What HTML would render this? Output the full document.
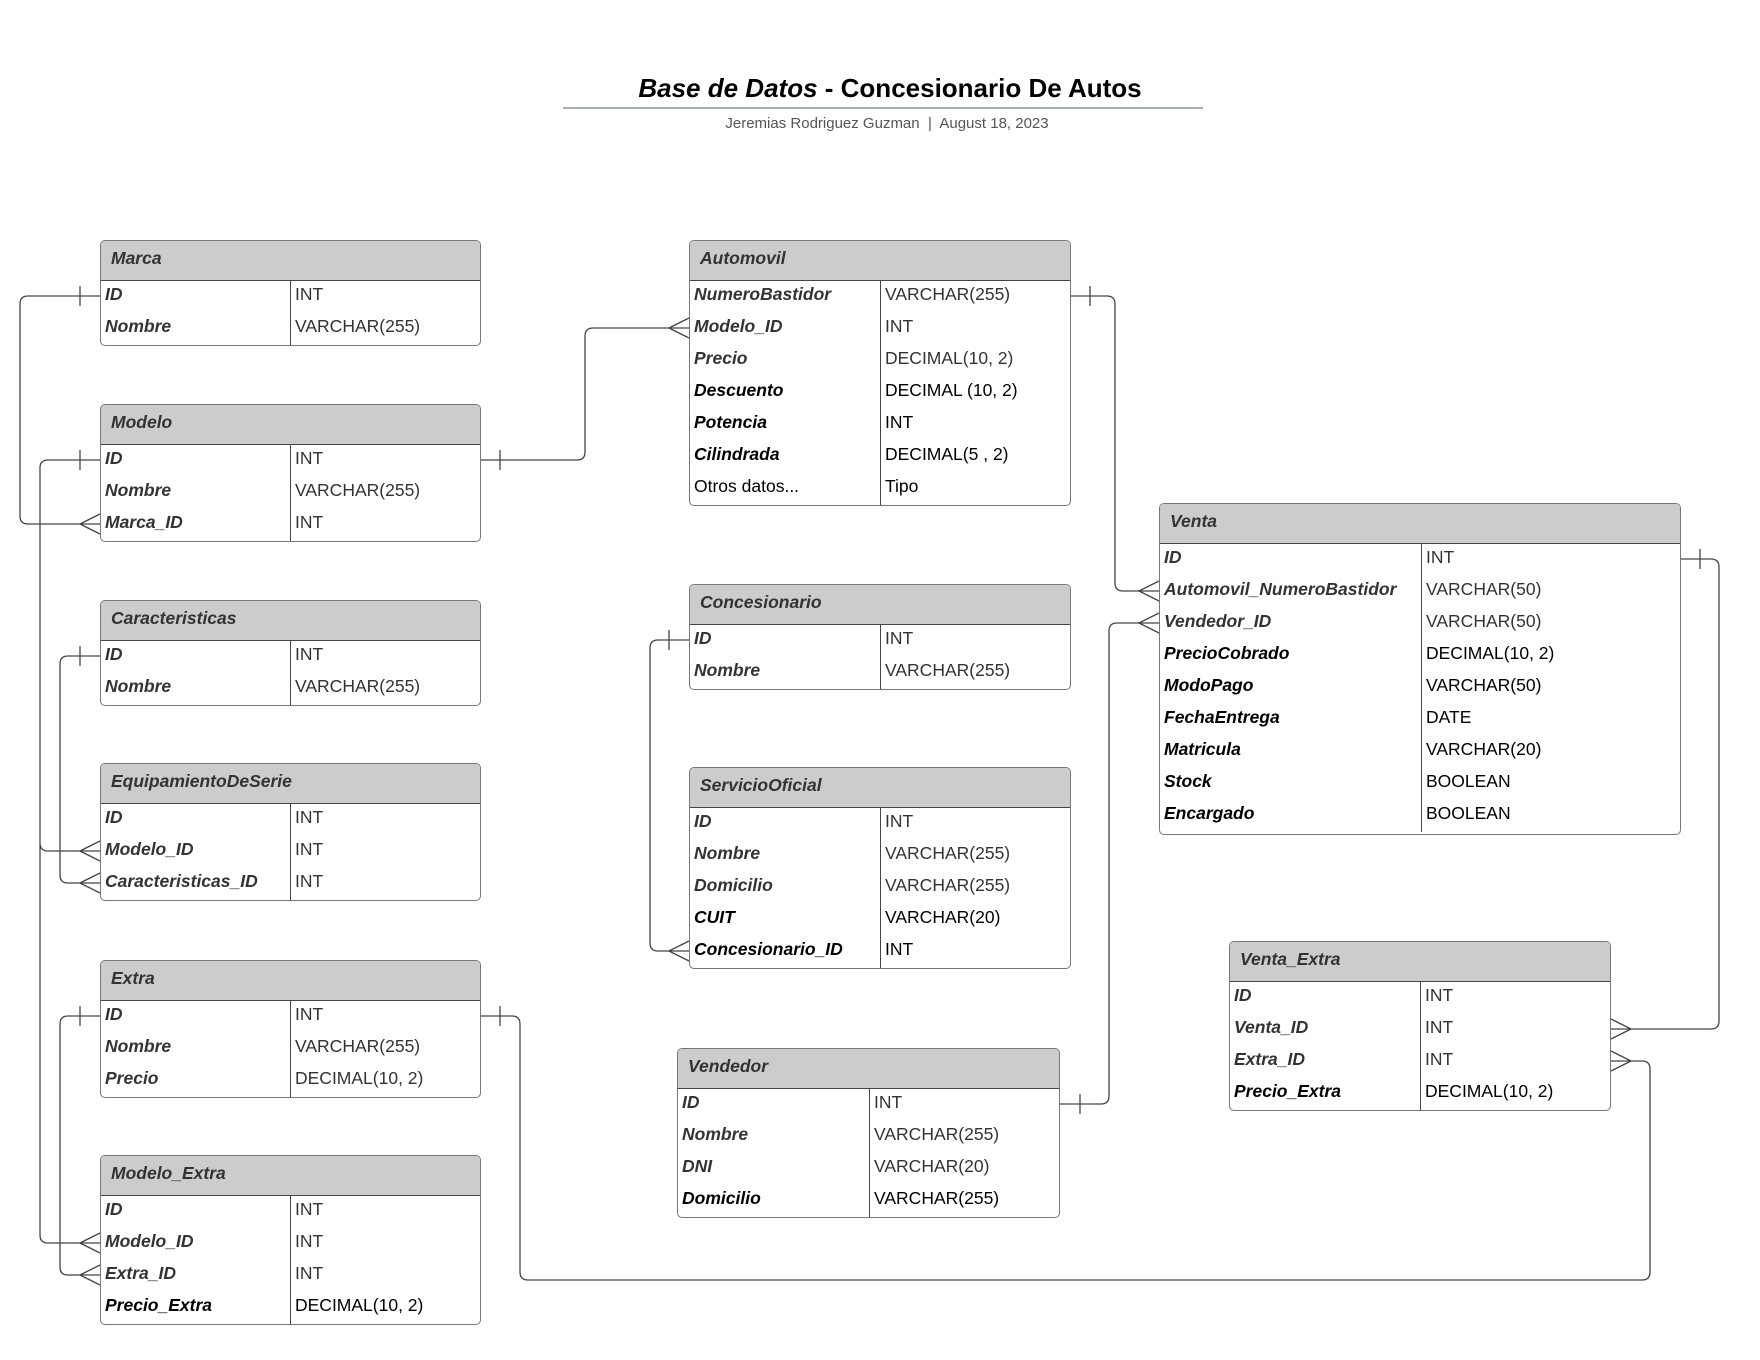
<!DOCTYPE html>
<html><head><meta charset="utf-8"><style>
body{margin:0;width:1760px;height:1360px;background:#fff;position:relative;font-family:"Liberation Sans",sans-serif;overflow:hidden}
.t{position:absolute;border:1.3px solid #777;border-radius:5px;background:#fff;overflow:hidden;box-sizing:border-box}
.h{height:40px;background:#ccc;border-bottom:1.3px solid #444;box-sizing:border-box;font-weight:bold;font-style:italic;font-size:17.5px;line-height:34px;padding-left:10px;color:#333}
.r{height:32px;line-height:26px;display:flex;font-size:17.5px;color:#333}
.k{border-right:1.3px solid #444;padding-left:4px;font-weight:bold;font-style:italic;box-sizing:border-box;flex:none;white-space:nowrap}
.v{padding-left:4px;white-space:nowrap}
.b{color:#000}
.n{font-weight:normal;font-style:normal}
</style></head><body>
<div style="position:absolute;left:0;width:1780px;top:73px;text-align:center;font-size:26px;font-weight:bold;color:#000"><i>Base de Datos</i> - Concesionario De Autos</div>
<div style="position:absolute;left:563px;width:640px;top:107px;height:2px;background:#a8adb8"></div>
<div style="position:absolute;left:0;width:1774px;top:115px;text-align:center;font-size:15px;color:#555">Jeremias Rodriguez Guzman &nbsp;|&nbsp; August 18, 2023</div>

<svg width="1760" height="1360" style="position:absolute;left:0;top:0" fill="none" stroke="#444" stroke-width="1.3">
<path d="M100 296H28Q20 296 20 304V516Q20 524 28 524H100"/><path d="M80 286V306M80 524L100 514M80 524L100 534"/>
<path d="M100 460H48Q40 460 40 468V1235Q40 1243 48 1243H100M40 843Q40 851 48 851H100"/><path d="M80 450V470M80 851L100 841M80 851L100 861M80 1243L100 1233M80 1243L100 1253"/>
<path d="M481 460H577Q585 460 585 452V336Q585 328 593 328H689"/><path d="M500 450V470M669 328L689 318M669 328L689 338"/>
<path d="M100 656H68Q60 656 60 664V875Q60 883 68 883H100"/><path d="M80 646V666M80 883L100 873M80 883L100 893"/>
<path d="M100 1016H68Q60 1016 60 1024V1267Q60 1275 68 1275H100"/><path d="M80 1006V1026M80 1275L100 1265M80 1275L100 1285"/>
<path d="M481 1016H512Q520 1016 520 1024V1272Q520 1280 528 1280H1642Q1650 1280 1650 1272V1069Q1650 1061 1642 1061H1611"/><path d="M500 1006V1026M1631 1061L1611 1051M1631 1061L1611 1071"/>
<path d="M1071 296H1107Q1115 296 1115 304V583Q1115 591 1123 591H1159"/><path d="M1090 286V306M1139 591L1159 581M1139 591L1159 601"/>
<path d="M1060 1104H1101Q1109 1104 1109 1096V631Q1109 623 1117 623H1159"/><path d="M1080 1094V1114M1139 623L1159 613M1139 623L1159 633"/>
<path d="M1681 559H1711Q1719 559 1719 567V1021Q1719 1029 1711 1029H1611"/><path d="M1700 549V569M1631 1029L1611 1019M1631 1029L1611 1039"/>
<path d="M689 640H658Q650 640 650 648V943Q650 951 658 951H689"/><path d="M669 630V650M669 951L689 941M669 951L689 961"/>
</svg>

<div class="t" style="left:100px;top:240px;width:381px;height:106px"><div class="h">Marca</div>
<div class="r"><div class="k" style="width:190px">ID</div><div class="v">INT</div></div>
<div class="r"><div class="k" style="width:190px">Nombre</div><div class="v">VARCHAR(255)</div></div></div>

<div class="t" style="left:100px;top:404px;width:381px;height:138px"><div class="h">Modelo</div>
<div class="r"><div class="k" style="width:190px">ID</div><div class="v">INT</div></div>
<div class="r"><div class="k" style="width:190px">Nombre</div><div class="v">VARCHAR(255)</div></div>
<div class="r"><div class="k" style="width:190px">Marca_ID</div><div class="v">INT</div></div></div>

<div class="t" style="left:100px;top:600px;width:381px;height:106px"><div class="h">Caracteristicas</div>
<div class="r"><div class="k" style="width:190px">ID</div><div class="v">INT</div></div>
<div class="r"><div class="k" style="width:190px">Nombre</div><div class="v">VARCHAR(255)</div></div></div>

<div class="t" style="left:100px;top:763px;width:381px;height:138px"><div class="h">EquipamientoDeSerie</div>
<div class="r"><div class="k" style="width:190px">ID</div><div class="v">INT</div></div>
<div class="r"><div class="k" style="width:190px">Modelo_ID</div><div class="v">INT</div></div>
<div class="r"><div class="k" style="width:190px">Caracteristicas_ID</div><div class="v">INT</div></div></div>

<div class="t" style="left:100px;top:960px;width:381px;height:138px"><div class="h">Extra</div>
<div class="r"><div class="k" style="width:190px">ID</div><div class="v">INT</div></div>
<div class="r"><div class="k" style="width:190px">Nombre</div><div class="v">VARCHAR(255)</div></div>
<div class="r"><div class="k" style="width:190px">Precio</div><div class="v">DECIMAL(10, 2)</div></div></div>

<div class="t" style="left:100px;top:1155px;width:381px;height:170px"><div class="h">Modelo_Extra</div>
<div class="r"><div class="k" style="width:190px">ID</div><div class="v">INT</div></div>
<div class="r"><div class="k" style="width:190px">Modelo_ID</div><div class="v">INT</div></div>
<div class="r"><div class="k" style="width:190px">Extra_ID</div><div class="v">INT</div></div>
<div class="r b"><div class="k" style="width:190px">Precio_Extra</div><div class="v">DECIMAL(10, 2)</div></div></div>

<div class="t" style="left:689px;top:240px;width:382px;height:266px"><div class="h">Automovil</div>
<div class="r"><div class="k" style="width:191px">NumeroBastidor</div><div class="v">VARCHAR(255)</div></div>
<div class="r"><div class="k" style="width:191px">Modelo_ID</div><div class="v">INT</div></div>
<div class="r"><div class="k" style="width:191px">Precio</div><div class="v">DECIMAL(10, 2)</div></div>
<div class="r b"><div class="k" style="width:191px">Descuento</div><div class="v">DECIMAL (10, 2)</div></div>
<div class="r b"><div class="k" style="width:191px">Potencia</div><div class="v">INT</div></div>
<div class="r b"><div class="k" style="width:191px">Cilindrada</div><div class="v">DECIMAL(5 , 2)</div></div>
<div class="r b"><div class="k n" style="width:191px">Otros datos...</div><div class="v">Tipo</div></div></div>

<div class="t" style="left:689px;top:584px;width:382px;height:106px"><div class="h">Concesionario</div>
<div class="r"><div class="k" style="width:191px">ID</div><div class="v">INT</div></div>
<div class="r"><div class="k" style="width:191px">Nombre</div><div class="v">VARCHAR(255)</div></div></div>

<div class="t" style="left:689px;top:767px;width:382px;height:202px"><div class="h">ServicioOficial</div>
<div class="r"><div class="k" style="width:191px">ID</div><div class="v">INT</div></div>
<div class="r"><div class="k" style="width:191px">Nombre</div><div class="v">VARCHAR(255)</div></div>
<div class="r"><div class="k" style="width:191px">Domicilio</div><div class="v">VARCHAR(255)</div></div>
<div class="r b"><div class="k" style="width:191px">CUIT</div><div class="v">VARCHAR(20)</div></div>
<div class="r b"><div class="k" style="width:191px">Concesionario_ID</div><div class="v">INT</div></div></div>

<div class="t" style="left:677px;top:1048px;width:383px;height:170px"><div class="h">Vendedor</div>
<div class="r"><div class="k" style="width:192px">ID</div><div class="v">INT</div></div>
<div class="r"><div class="k" style="width:192px">Nombre</div><div class="v">VARCHAR(255)</div></div>
<div class="r"><div class="k" style="width:192px">DNI</div><div class="v">VARCHAR(20)</div></div>
<div class="r b"><div class="k" style="width:192px">Domicilio</div><div class="v">VARCHAR(255)</div></div></div>

<div class="t" style="left:1159px;top:503px;width:522px;height:332px"><div class="h">Venta</div>
<div class="r"><div class="k" style="width:262px">ID</div><div class="v">INT</div></div>
<div class="r"><div class="k" style="width:262px">Automovil_NumeroBastidor</div><div class="v">VARCHAR(50)</div></div>
<div class="r"><div class="k" style="width:262px">Vendedor_ID</div><div class="v">VARCHAR(50)</div></div>
<div class="r b"><div class="k" style="width:262px">PrecioCobrado</div><div class="v">DECIMAL(10, 2)</div></div>
<div class="r b"><div class="k" style="width:262px">ModoPago</div><div class="v">VARCHAR(50)</div></div>
<div class="r b"><div class="k" style="width:262px">FechaEntrega</div><div class="v">DATE</div></div>
<div class="r b"><div class="k" style="width:262px">Matricula</div><div class="v">VARCHAR(20)</div></div>
<div class="r b"><div class="k" style="width:262px">Stock</div><div class="v">BOOLEAN</div></div>
<div class="r b"><div class="k" style="width:262px">Encargado</div><div class="v">BOOLEAN</div></div></div>

<div class="t" style="left:1229px;top:941px;width:382px;height:170px"><div class="h">Venta_Extra</div>
<div class="r"><div class="k" style="width:191px">ID</div><div class="v">INT</div></div>
<div class="r"><div class="k" style="width:191px">Venta_ID</div><div class="v">INT</div></div>
<div class="r"><div class="k" style="width:191px">Extra_ID</div><div class="v">INT</div></div>
<div class="r b"><div class="k" style="width:191px">Precio_Extra</div><div class="v">DECIMAL(10, 2)</div></div></div>
</body></html>
